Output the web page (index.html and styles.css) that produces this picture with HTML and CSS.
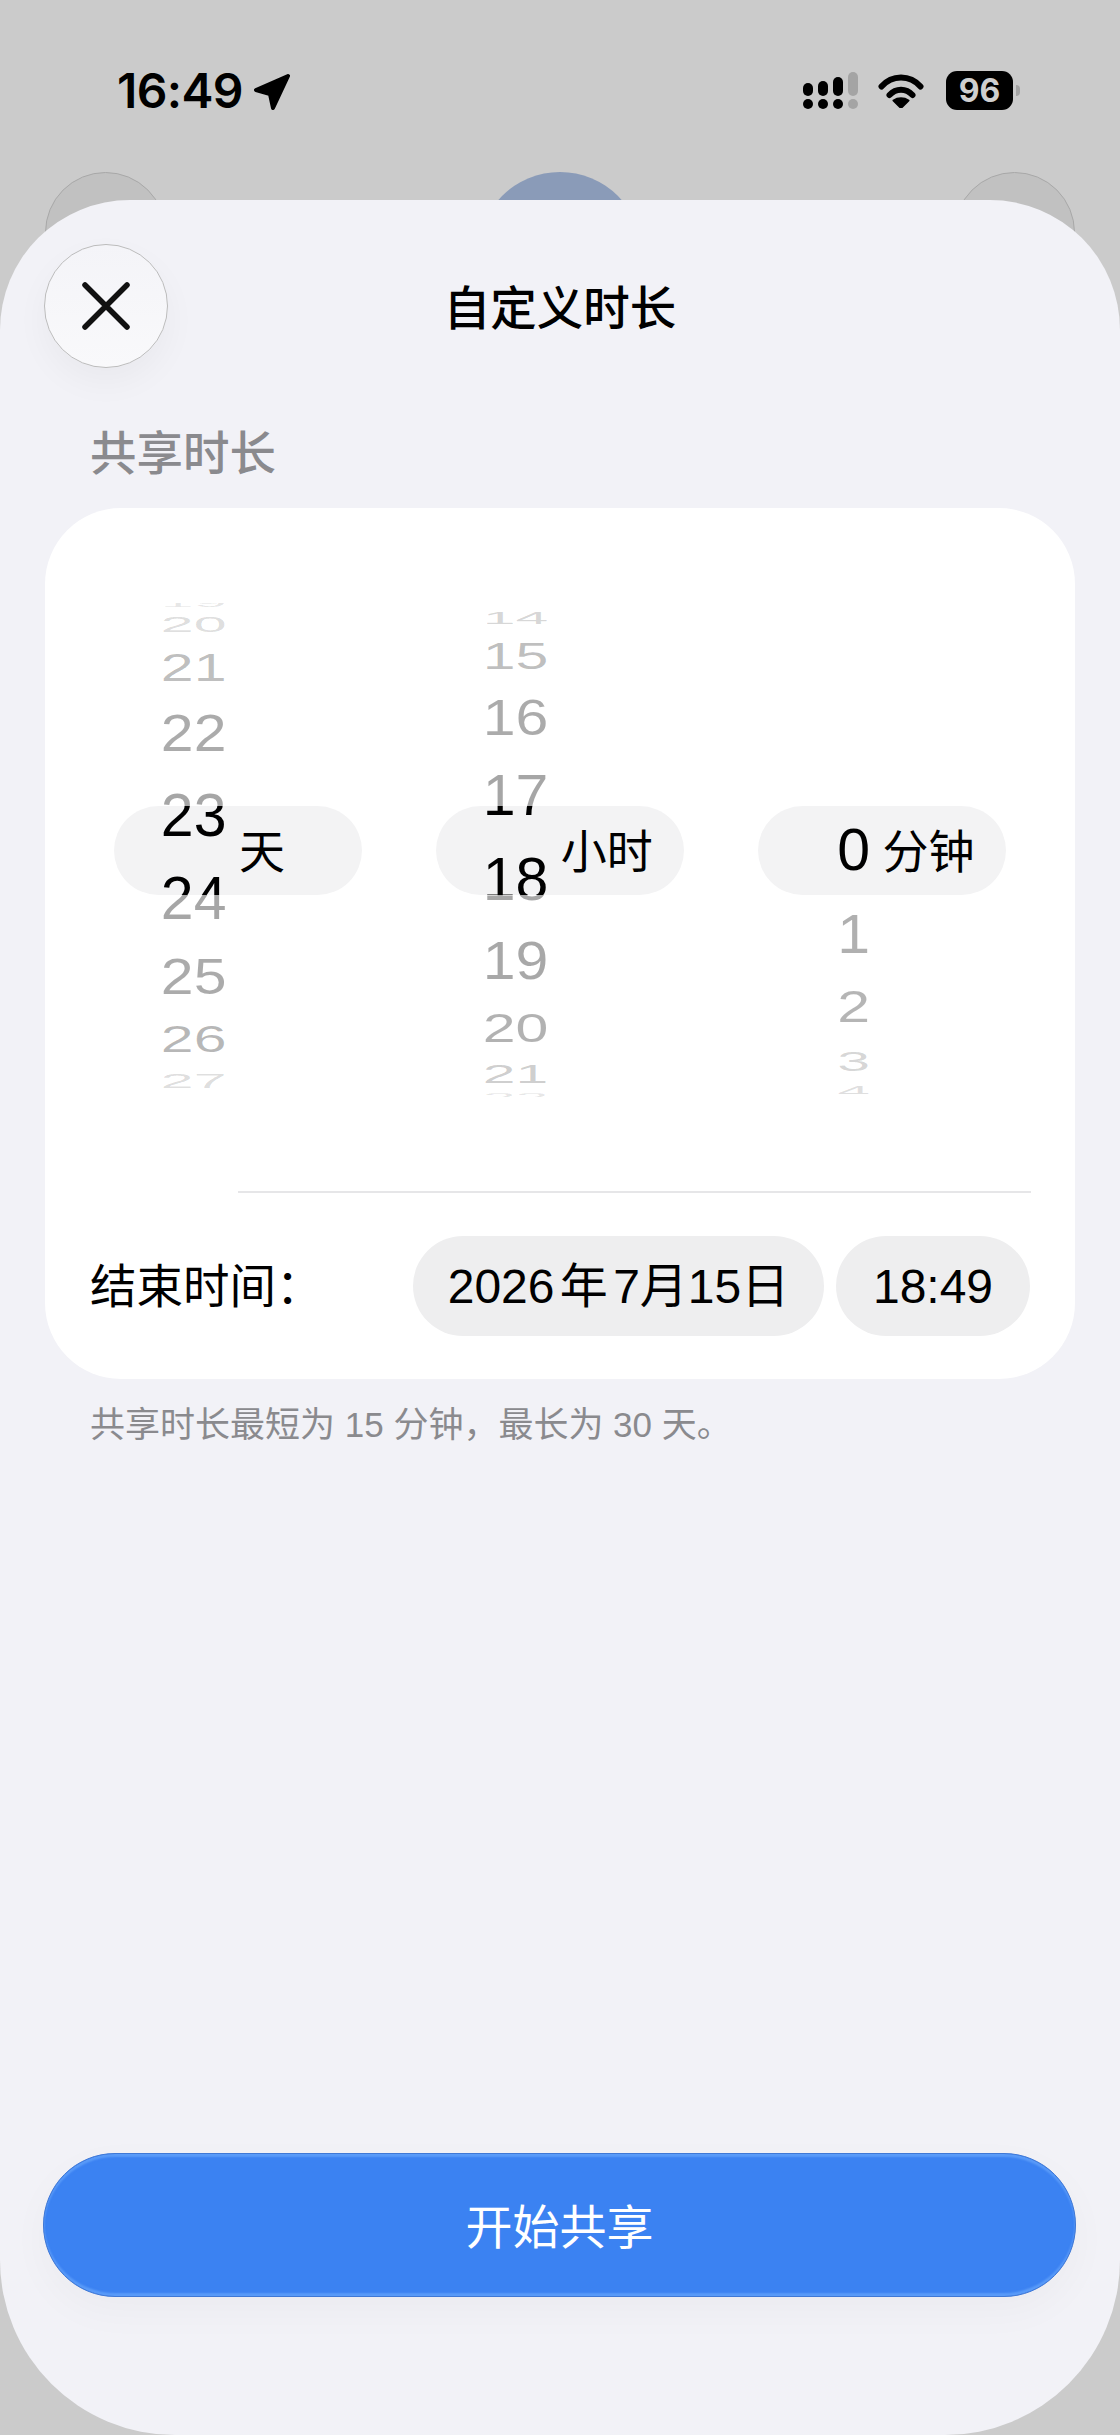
FILE: index.html
```html
<!DOCTYPE html>
<html lang="zh-CN">
<head>
<meta charset="utf-8">
<title>自定义时长</title>
<link rel="stylesheet" href="styles.css">
</head>
<body>
<div class="screen">
  <div class="top">
    <div class="status">
      <div class="clock">
        <span class="time">16:49</span>
        <svg class="arrow" viewBox="0 0 37 36"><path d="M35 2 L3 16 L17 20 L20 34 Z"/></svg>
      </div>
      <div class="indicators">
        <svg class="signal" viewBox="0 0 55 38">
          <rect class="on" x="0" y="11" width="10" height="13" rx="5"/>
          <rect class="on" x="15" y="9" width="10" height="15" rx="5"/>
          <rect class="on" x="30" y="5" width="10" height="19" rx="5"/>
          <rect class="off" x="45" y="0" width="10" height="24" rx="5"/>
          <circle class="on" cx="5" cy="32" r="5"/>
          <circle class="on" cx="20" cy="32" r="5"/>
          <circle class="on" cx="35" cy="32" r="5"/>
          <circle class="off" cx="50" cy="32" r="5"/>
        </svg>
        <svg class="wifi" viewBox="0 0 46 34">
          <path class="arc" d="M3.5 12.5 C14 0.5 32 0.5 42.5 12.5"/>
          <path class="arc" d="M11.5 21 C18 14 28 14 34.5 21"/>
          <path class="dot" d="M23 34 L15.5 26.5 C20 23.5 26 23.5 30.5 26.5 Z"/>
        </svg>
        <div class="battery"><span class="level">96</span><span class="nub"></span></div>
      </div>
    </div>
    <div class="avatars">
      <span class="avatar"></span>
      <span class="avatar avatar-main"></span>
      <span class="avatar"></span>
    </div>
  </div>

  <main class="sheet">
    <header class="sheet-head">
      <button class="close" aria-label="关闭">
        <svg viewBox="0 0 48 48"><path d="M3 3 L45 45 M45 3 L3 45"/></svg>
      </button>
      <h1 class="title">自定义时长</h1>
      <span></span>
    </header>

    <div class="section-label">共享时长</div>

    <section class="card">
      <div class="picker">
        <div class="col">
          <div class="wheel">
            <div class="num" style="--m:-4;--h:8;--a:.1">19</div>
            <div class="num" style="--m:9;--h:16;--a:.15">20</div>
            <div class="num" style="--m:23;--h:27;--a:.27">21</div>
            <div class="num" style="--m:33;--h:37;--a:.33">22</div>
            <div class="num" style="--m:41;--h:44;--a:.35">23</div>
            <div class="num" style="--m:41;--h:42;--a:.35">24</div>
            <div class="num" style="--m:39;--h:36;--a:.33">25</div>
            <div class="num" style="--m:32;--h:26;--a:.28">26</div>
            <div class="num" style="--m:21;--h:14;--a:.14">27</div>
          </div>
          <div class="pill">
            <div class="num sel" style="--t:-13;--h:44">23</div>
            <div class="num sel" style="--t:72;--h:42">24</div>
            <span class="unit">天</span>
          </div>
        </div>
        <div class="col">
          <div class="wheel">
            <div class="num" style="--m:9;--h:12;--a:.17">14</div>
            <div class="num" style="--m:20;--h:26;--a:.26">15</div>
            <div class="num" style="--m:31;--h:35;--a:.33">16</div>
            <div class="num" style="--m:39;--h:41;--a:.35">17</div>
            <div class="num" style="--m:43;--h:42;--a:.35">18</div>
            <div class="num" style="--m:41;--h:38;--a:.34">19</div>
            <div class="num" style="--m:34;--h:29;--a:.3">20</div>
            <div class="num" style="--m:22;--h:18;--a:.2">21</div>
            <div class="num" style="--m:10;--h:8;--a:.1">22</div>
          </div>
          <div class="pill">
            <div class="num sel" style="--t:-31;--h:41">17</div>
            <div class="num sel" style="--t:53;--h:42">18</div>
            <span class="unit">小时</span>
          </div>
        </div>
        <div class="col">
          <div class="wheel wheel-min">
            <div class="num" style="--m:227;--h:42;--a:.35">0</div>
            <div class="num" style="--m:43;--h:39;--a:.31">1</div>
            <div class="num" style="--m:37;--h:32;--a:.29">2</div>
            <div class="num" style="--m:28;--h:20;--a:.17">3</div>
            <div class="num" style="--m:15;--h:10;--a:.12">4</div>
          </div>
          <div class="pill">
            <div class="num sel" style="--t:24;--h:42">0</div>
            <span class="unit">分钟</span>
          </div>
        </div>
      </div>
      <div class="divider"></div>
      <div class="end-row">
        <span class="end-label">结束时间：</span>
        <div class="end-values">
          <span class="chip chip-date">2026 年 7月15日</span>
          <span class="chip chip-time">18:49</span>
        </div>
      </div>
    </section>

    <p class="note">共享时长最短为 15 分钟，最长为 30 天。</p>

    <button class="start">开始共享</button>
  </main>
</div>
</body>
</html>
```

FILE: styles.css
```css
* { box-sizing: border-box; }
html, body { margin: 0; padding: 0; }
body {
  font-family: "Liberation Sans", "Noto Sans CJK SC", sans-serif;
  color: #000;
}
.screen {
  width: 1120px;
  height: 2435px;
  background: #cbcbcb;
  display: flex;
  flex-direction: column;
  overflow: hidden;
}

/* top area */
.top { height: 200px; flex: none; padding-top: 71px; }
.status {
  height: 39px;
  display: flex;
  justify-content: space-between;
  align-items: center;
  padding: 0 107px 0 117px;
}
.clock { display: flex; align-items: center; gap: 10px; }
.time {
  font-family: Inter, "Liberation Sans", sans-serif;
  font-weight: 600;
  font-size: 48px;
  line-height: 39px;
  letter-spacing: -.6px;
}
.arrow { width: 37px; height: 36px; margin-top: 2px; }
.arrow path { fill: #000; stroke: #000; stroke-width: 4; stroke-linejoin: round; }
.indicators { display: flex; align-items: center; }
.signal { width: 55px; height: 38px; margin-top: 1px; }
.signal .on { fill: #000; }
.signal .off { fill: #a4a4a4; }
.wifi { width: 46px; height: 34px; margin-left: 20px; }
.wifi .arc { fill: none; stroke: #000; stroke-width: 6; stroke-linecap: round; }
.wifi .dot { fill: #000; stroke: #000; stroke-width: 2; stroke-linejoin: round; }
.battery {
  position: relative;
  width: 67px;
  height: 39px;
  margin-left: 22px;
  background: #000;
  border-radius: 11px;
  display: flex;
  align-items: center;
  justify-content: center;
}
.level {
  font-family: Inter, "Liberation Sans", sans-serif;
  font-weight: 700;
  font-size: 32px;
  line-height: 39px;
  color: #cfcfcf;
}
.nub {
  position: absolute;
  left: 70px;
  top: 14px;
  width: 4px;
  height: 11px;
  border-radius: 0 5px 5px 0;
  background: #a4a4a4;
}
.avatars {
  display: flex;
  justify-content: space-between;
  padding: 0 45px;
  margin-top: 62px;
  height: 28px;
}
.avatar {
  width: 121px;
  height: 121px;
  border-radius: 50%;
  background: #c1c1c1;
  border: 1.5px solid #a8a8a8;
}
.avatar-main {
  width: 164px;
  height: 164px;
  background: #8a9bb8;
  border: 0;
}

/* sheet */
.sheet {
  position: relative;
  flex: 1;
  background: #f2f2f7;
  border-radius: 130px 130px 175px 175px;
  display: flex;
  flex-direction: column;
}
.sheet-head {
  display: grid;
  grid-template-columns: 1fr auto 1fr;
  align-items: center;
  padding: 44px 44px 0;
}
.close {
  width: 124px;
  height: 124px;
  padding: 0;
  border-radius: 50%;
  border: 1.5px solid #bcbcbc;
  background: linear-gradient(180deg, #f4f4f8, #f9f9fb);
  box-shadow: 0 14px 34px rgba(0, 0, 0, .04);
  display: flex;
  align-items: center;
  justify-content: center;
}
.close svg { width: 48px; height: 48px; }
.close path { fill: none; stroke: #111; stroke-width: 5.5; stroke-linecap: round; }
.title {
  margin: 0;
  padding-top: 5px;
  font-size: 46.5px;
  line-height: 60px;
  font-weight: 500;
}
.section-label {
  margin: 54px 0 26px;
  padding: 2px 0 0 90px;
  height: 60px;
  font-size: 46.5px;
  line-height: 60px;
  font-weight: 500;
  color: #8a8a8e;
}
.card {
  margin: 0 45px;
  height: 871px;
  background: #fff;
  border-radius: 76px;
  padding-top: 95px;
}

/* picker */
.picker {
  display: flex;
  gap: 73.4px;
  padding: 0 69px;
}
.col {
  width: 248.4px;
  height: 494px;
  display: grid;
  align-items: center;
}
.wheel, .pill { grid-area: 1 / 1; }
.wheel {
  height: 494px;
  overflow: hidden;
  display: flex;
  flex-direction: column;
  align-items: flex-start;
}
.wheel-min { height: 491px; align-self: start; }
.num {
  flex: none;
  width: 112.5px;
  height: calc(var(--h) * 1px);
  margin-top: calc(var(--m) * 1px);
  display: flex;
  align-items: center;
  justify-content: flex-end;
  font-size: 59px;
  line-height: 1;
  color: rgba(0, 0, 0, var(--a));
  transform: scaleY(calc(var(--h) / 42));
}
.pill {
  position: relative;
  height: 89px;
  background: #f3f3f4;
  border-radius: 45px;
  overflow: hidden;
  display: flex;
  align-items: center;
}
.num.sel {
  position: absolute;
  left: 0;
  top: calc(var(--t) * 1px);
  margin: 0;
  color: #000;
}
.unit {
  margin-left: 125px;
  padding-top: 4px;
  font-size: 46px;
  line-height: 60px;
}
.divider {
  height: 2px;
  margin: 94px 44px 0 193px;
  background: #e6e6e8;
}
.end-row {
  display: flex;
  justify-content: space-between;
  align-items: center;
  padding: 43px 45px 0;
}
.end-label { padding-top: 2px; font-size: 46.5px; line-height: 60px; }
.end-values { display: flex; gap: 12px; }
.chip {
  height: 100px;
  border-radius: 50px;
  background: #eeeeef;
  font-size: 48px;
  line-height: 102px;
  text-align: center;
  word-spacing: -8px;
}
.chip-date { width: 411px; }
.chip-time { width: 194px; }
.note {
  margin: 21px 0 0;
  padding-left: 90px;
  font-size: 35px;
  line-height: 50px;
  color: #8a8a8e;
}
.start {
  display: block;
  width: 1033px;
  height: 144px;
  margin: auto 0 138px 43px;
  padding: 0 0 4px;
  border: 1.5px solid #3f78d6;
  border-radius: 72px;
  background: #3b82f2;
  box-shadow: inset 0 3px 2px rgba(120, 180, 255, .5), inset 0 -3px 2px rgba(120, 180, 255, .5), 0 14px 40px rgba(0, 0, 0, .03);
  color: #fff;
  font-family: inherit;
  font-size: 47px;
}
```
